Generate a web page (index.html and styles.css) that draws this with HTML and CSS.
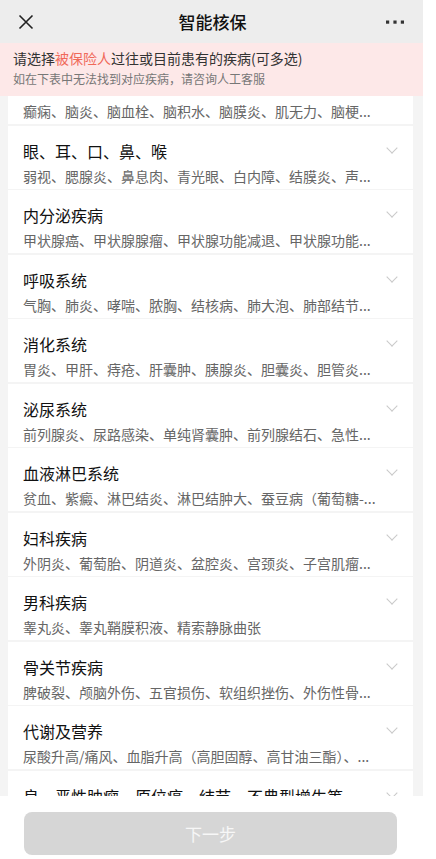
FILE: index.html
```html
<!DOCTYPE html>
<html lang="zh-CN">
<head>
    <meta charset="UTF-8">
    <meta name="viewport" content="width=device-width, initial-scale=1.0">
    <title>智能核保</title>
    <link rel="stylesheet" href="styles.css">
</head>
<body>
    <div class="app">
        <div class="top-bar">
            <svg class="top-icon" width="16" height="16" viewBox="0 0 16 16">
                <path d="M1.5 1.5 L14.5 14.5 M14.5 1.5 L1.5 14.5" stroke="#222" stroke-width="1.6" fill="none"/>
            </svg>
            <div class="top-title">智能核保</div>
            <svg class="top-icon" width="20" height="6" viewBox="0 0 20 6">
                <rect x="1" y="1.5" width="3.2" height="3.2" fill="#333"/>
                <rect x="8.4" y="1.5" width="3.2" height="3.2" fill="#333"/>
                <rect x="15.8" y="1.5" width="3.2" height="3.2" fill="#333"/>
            </svg>
        </div>

        <div class="notice">
            <p class="notice-main">请选择<span class="highlight">被保险人</span>过往或目前患有的疾病(可多选)</p>
            <p class="notice-sub">如在下表中无法找到对应疾病，请咨询人工客服</p>
        </div>

        <div class="disease-list">
            <div class="list-inner">
                <!-- scrolled: only the description of the first group is visible -->
                <div class="disease-item cut">
                    <div class="item-text">
                        <div class="item-desc">癫痫、脑炎、脑血栓、脑积水、脑膜炎、肌无力、脑梗...</div>
                    </div>
                </div>
                <div class="disease-item">
                    <div class="item-text">
                        <div class="item-title">眼、耳、口、鼻、喉</div>
                        <div class="item-desc">弱视、腮腺炎、鼻息肉、青光眼、白内障、结膜炎、声...</div>
                    </div>
                    <span class="chevron"></span>
                </div>
                <div class="disease-item">
                    <div class="item-text">
                        <div class="item-title">内分泌疾病</div>
                        <div class="item-desc">甲状腺癌、甲状腺腺瘤、甲状腺功能减退、甲状腺功能...</div>
                    </div>
                    <span class="chevron"></span>
                </div>
                <div class="disease-item">
                    <div class="item-text">
                        <div class="item-title">呼吸系统</div>
                        <div class="item-desc">气胸、肺炎、哮喘、脓胸、结核病、肺大泡、肺部结节...</div>
                    </div>
                    <span class="chevron"></span>
                </div>
                <div class="disease-item">
                    <div class="item-text">
                        <div class="item-title">消化系统</div>
                        <div class="item-desc">胃炎、甲肝、痔疮、肝囊肿、胰腺炎、胆囊炎、胆管炎...</div>
                    </div>
                    <span class="chevron"></span>
                </div>
                <div class="disease-item">
                    <div class="item-text">
                        <div class="item-title">泌尿系统</div>
                        <div class="item-desc">前列腺炎、尿路感染、单纯肾囊肿、前列腺结石、急性...</div>
                    </div>
                    <span class="chevron"></span>
                </div>
                <div class="disease-item">
                    <div class="item-text">
                        <div class="item-title">血液淋巴系统</div>
                        <div class="item-desc">贫血、紫癜、淋巴结炎、淋巴结肿大、蚕豆病（葡萄糖-...</div>
                    </div>
                    <span class="chevron"></span>
                </div>
                <div class="disease-item">
                    <div class="item-text">
                        <div class="item-title">妇科疾病</div>
                        <div class="item-desc">外阴炎、葡萄胎、阴道炎、盆腔炎、宫颈炎、子宫肌瘤...</div>
                    </div>
                    <span class="chevron"></span>
                </div>
                <div class="disease-item">
                    <div class="item-text">
                        <div class="item-title">男科疾病</div>
                        <div class="item-desc">睾丸炎、睾丸鞘膜积液、精索静脉曲张</div>
                    </div>
                    <span class="chevron"></span>
                </div>
                <div class="disease-item">
                    <div class="item-text">
                        <div class="item-title">骨关节疾病</div>
                        <div class="item-desc">脾破裂、颅脑外伤、五官损伤、软组织挫伤、外伤性骨...</div>
                    </div>
                    <span class="chevron"></span>
                </div>
                <div class="disease-item">
                    <div class="item-text">
                        <div class="item-title">代谢及营养</div>
                        <div class="item-desc">尿酸升高/痛风、血脂升高（高胆固醇、高甘油三酯）、...</div>
                    </div>
                    <span class="chevron"></span>
                </div>
                <div class="disease-item">
                    <div class="item-text">
                        <div class="item-title">良、恶性肿瘤、原位癌、结节、不典型增生等</div>
                    </div>
                    <span class="chevron"></span>
                </div>
            </div>
        </div>

        <div class="footer">
            <button class="next-button" disabled>下一步</button>
        </div>
    </div>
</body>
</html>
```

FILE: styles.css
```css
body, html {
    margin: 0;
    padding: 0;
    background-color: #fff;
    font-family: 'Noto Sans CJK SC', 'Noto Sans', sans-serif;
    height: 100%;
    overflow: hidden;
}
.app {
    width: 423px;
    height: 859px;
    display: flex;
    flex-direction: column;
    background-color: #f4f4f4;
}
.top-bar {
    height: 43px;
    flex-shrink: 0;
    background-color: #ededed;
    display: flex;
    align-items: center;
    justify-content: space-between;
    padding: 0 18px 0 18px;
}
.top-icon {
    display: block;
}
.top-title {
    font-size: 17px;
    font-weight: 500;
    color: #111;
    margin-left: 6px;
}
.notice {
    height: 53px;
    flex-shrink: 0;
    box-sizing: border-box;
    background-color: #fde8e8;
    padding: 5px 13px 0;
}
.notice p {
    margin: 0;
}
.notice-main {
    font-size: 14px;
    line-height: 20px;
    color: #333;
}
.highlight {
    color: #f0695a;
}
.notice .notice-sub {
    font-size: 12px;
    line-height: 18px;
    margin-top: 2px;
    color: #777;
}
.disease-list {
    flex: 1;
    overflow: hidden;
    padding: 0 10px 0 8px;
}
.list-inner {
    display: flex;
    flex-direction: column;
    gap: 1.5px;
}
.disease-item {
    background-color: #fff;
    height: 63px;
    flex-shrink: 0;
    box-sizing: border-box;
    padding: 14px 15px 0 15px;
    display: flex;
    align-items: flex-start;
    justify-content: space-between;
}
.disease-item.cut {
    height: 28px;
    padding-top: 5px;
}
.disease-item.cut .item-desc {
    margin-top: 0;
}
.item-text {
    min-width: 0;
    flex: 1;
}
.item-title {
    font-size: 16px;
    line-height: 22px;
    color: #111;
}
.item-desc {
    font-size: 14px;
    line-height: 20px;
    margin-top: 4px;
    color: #666;
    white-space: nowrap;
    overflow: hidden;
    text-overflow: ellipsis;
}
.chevron {
    width: 7px;
    height: 7px;
    border-right: 1.5px solid #c9c9c9;
    border-bottom: 1.5px solid #c9c9c9;
    transform: rotate(45deg);
    margin: 4px 2px 0 10px;
    flex-shrink: 0;
}
.footer {
    height: 63px;
    flex-shrink: 0;
    background-color: #fff;
    padding: 16px 26px 0 24px;
    box-sizing: border-box;
}
.next-button {
    width: 100%;
    height: 43px;
    border: none;
    border-radius: 8px;
    background-color: #d6d6d6;
    color: #f7f7f7;
    font-family: inherit;
    font-size: 17px;
}
```
